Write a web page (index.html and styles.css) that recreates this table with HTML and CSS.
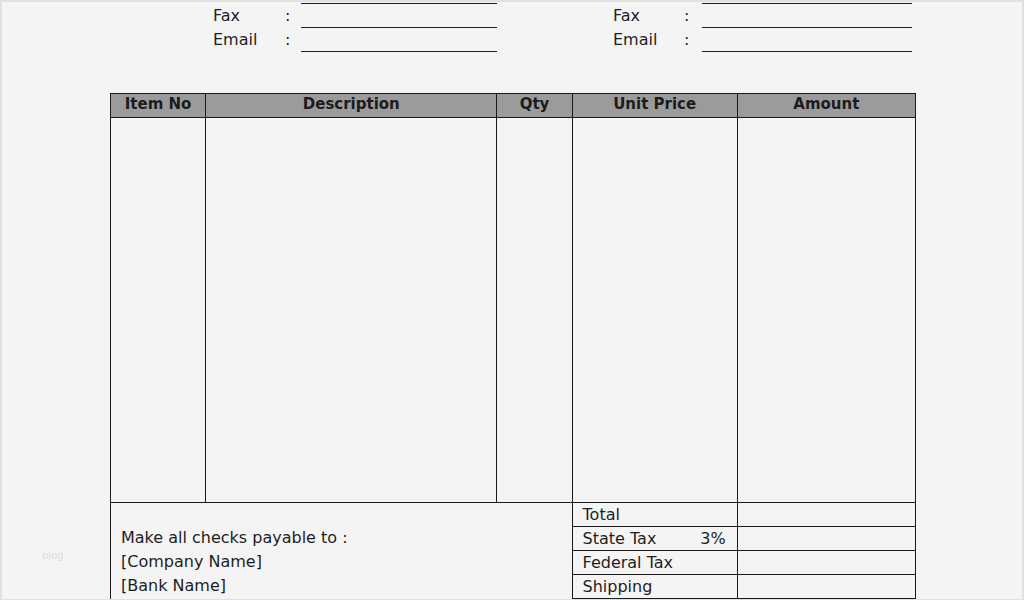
FILE: index.html
```html
<!DOCTYPE html>
<html>
<head>
<meta charset="utf-8">
<link rel="stylesheet" href="styles.css">
</head>
<body>
<div class="page">
  <div class="contact">
    <div class="contact-block left">
      <span class="lbl"></span><span class="colon"></span><span class="fill"></span>
      <span class="lbl">Fax</span><span class="colon">:</span><span class="fill"></span>
      <span class="lbl">Email</span><span class="colon">:</span><span class="fill"></span>
    </div>
    <div class="contact-block right">
      <span class="lbl"></span><span class="colon"></span><span class="fill"></span>
      <span class="lbl">Fax</span><span class="colon">:</span><span class="fill"></span>
      <span class="lbl">Email</span><span class="colon">:</span><span class="fill"></span>
    </div>
  </div>

  <table class="items">
    <colgroup>
      <col class="c-item"><col class="c-desc"><col class="c-qty"><col class="c-price"><col class="c-amount">
    </colgroup>
    <thead>
      <tr><th>Item No</th><th>Description</th><th>Qty</th><th>Unit Price</th><th>Amount</th></tr>
    </thead>
    <tbody>
      <tr class="body-row"><td></td><td></td><td></td><td></td><td></td></tr>
      <tr class="sum-row">
        <td colspan="3" rowspan="5" class="pay">
          <div class="pay-text">
            <span>&nbsp;</span>
            <span>Make all checks payable to :</span>
            <span>[Company Name]</span>
            <span>[Bank Name]</span>
          </div>
        </td>
        <td class="sum-label">Total</td><td></td>
      </tr>
      <tr class="sum-row"><td class="sum-label"><span class="split"><span>State Tax</span><span>3%</span></span></td><td></td></tr>
      <tr class="sum-row"><td class="sum-label">Federal Tax</td><td></td></tr>
      <tr class="sum-row"><td class="sum-label">Shipping</td><td></td></tr>
      <tr class="sum-row"><td class="sum-label"></td><td></td></tr>
    </tbody>
  </table>

  <div class="watermark">blog</div>
</div>
</body>
</html>
```

FILE: styles.css
```css
html, body {
  margin: 0;
  padding: 0;
  background: #f4f4f4;
}

.page {
  position: relative;
  width: 1024px;
  height: 600px;
  box-sizing: border-box;
  overflow: hidden;
  border: 2px solid #e0e0e0;
  border-bottom-width: 1px;
  background: #f4f4f4;
  font-family: "DejaVu Sans", "Liberation Sans", sans-serif;
  font-size: 16px;
  color: #1e1e1e;
}

.contact {
  display: flex;
  gap: 116px;
  margin-top: -22px;
  padding-left: 211px;
}

.contact-block {
  display: grid;
  grid-auto-rows: 24px;
  align-items: center;
}

.contact-block.left {
  grid-template-columns: 72px 16px 196px;
}

.contact-block.right {
  grid-template-columns: 71px 18px 210px;
}

.lbl, .colon {
  line-height: 24px;
}

.fill {
  align-self: stretch;
  border-bottom: 1px solid #222;
}

.items {
  border-collapse: collapse;
  table-layout: fixed;
  width: 806px;
  margin: 41px 0 0 108px;
}

.c-item { width: 95px; }
.c-desc { width: 291px; }
.c-qty { width: 75px; }
.c-price { width: 165px; }
.c-amount { width: 178px; }

.items th,
.items td {
  border: 1px solid #1a1a1a;
  padding: 0;
}

.items th {
  height: 24px;
  padding-bottom: 3px;
  box-sizing: border-box;
  background: #9b9b9b;
  font-weight: bold;
  font-size: 15px;
  color: #1c1c1c;
  text-align: center;
  vertical-align: middle;
}

.body-row td {
  height: 384px;
}

.sum-row td {
  height: 23px;
  line-height: 22px;
  vertical-align: middle;
}

.sum-label {
  padding: 0 10px !important;
}

.split {
  display: flex;
  justify-content: space-between;
  padding-right: 1px;
}

.pay {
  vertical-align: top !important;
}

.pay-text {
  display: flex;
  flex-direction: column;
  padding: 0 10px;
  line-height: 24px;
  margin-top: -1px;
}

.watermark {
  position: absolute;
  left: 40px;
  top: 548px;
  font-size: 10px;
  color: #dcdcdc;
}
```
